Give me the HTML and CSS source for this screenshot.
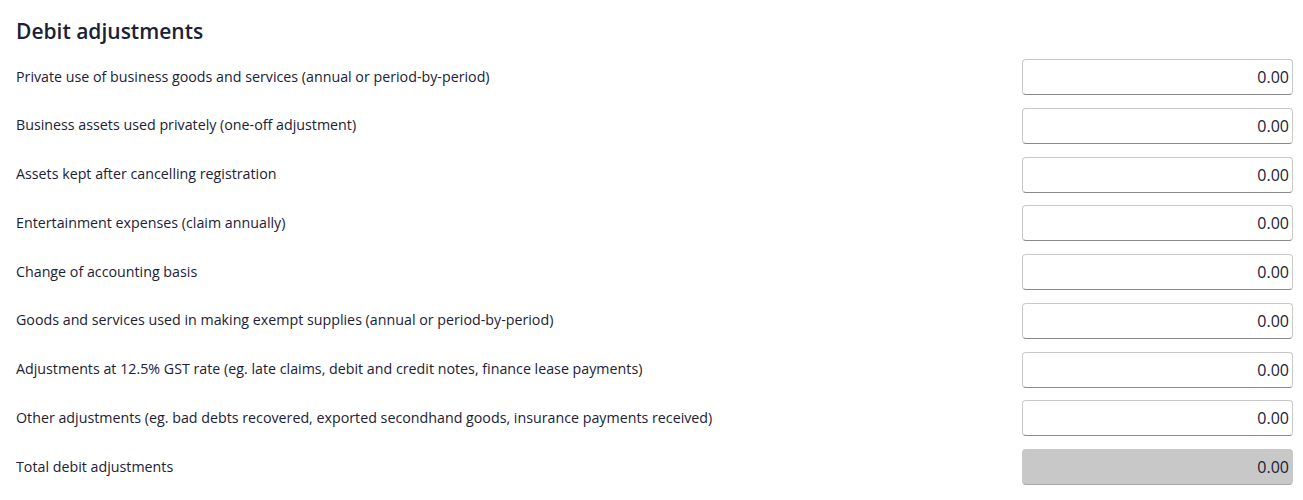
FILE: index.html
```html
<!DOCTYPE html>
<html lang="en">
<head>
    <meta charset="UTF-8">
    <title>Debit adjustments</title>
    <link rel="stylesheet" href="styles.css">
</head>
<body>
    <div class="wrapper">
        <h2 class="section-title">Debit adjustments</h2>
        <div class="adj-list">
            <div class="adj-row">
                <label class="adj-label">Private use of business goods and services (annual or period-by-period)</label>
                <input class="adj-input" type="text" value="0.00">
            </div>
            <div class="adj-row">
                <label class="adj-label">Business assets used privately (one-off adjustment)</label>
                <input class="adj-input" type="text" value="0.00">
            </div>
            <div class="adj-row">
                <label class="adj-label">Assets kept after cancelling registration</label>
                <input class="adj-input" type="text" value="0.00">
            </div>
            <div class="adj-row">
                <label class="adj-label">Entertainment expenses (claim annually)</label>
                <input class="adj-input" type="text" value="0.00">
            </div>
            <div class="adj-row">
                <label class="adj-label">Change of accounting basis</label>
                <input class="adj-input" type="text" value="0.00">
            </div>
            <div class="adj-row">
                <label class="adj-label">Goods and services used in making exempt supplies (annual or period-by-period)</label>
                <input class="adj-input" type="text" value="0.00">
            </div>
            <div class="adj-row">
                <label class="adj-label">Adjustments at 12.5% GST rate (eg. late claims, debit and credit notes, finance lease payments)</label>
                <input class="adj-input" type="text" value="0.00">
            </div>
            <div class="adj-row">
                <label class="adj-label">Other adjustments (eg. bad debts recovered, exported secondhand goods, insurance payments received)</label>
                <input class="adj-input" type="text" value="0.00">
            </div>
            <div class="adj-row">
                <label class="adj-label">Total debit adjustments</label>
                <input class="adj-input total" type="text" value="0.00" readonly>
            </div>
        </div>
    </div>
</body>
</html>
```

FILE: styles.css
```css
/* Presets */
html,
body {
    margin: 0;
    background: #fff;
    color: #1c2135;
    font-family: 'Open Sans', 'Noto Sans', sans-serif;
}

.wrapper {
    padding: 14px 10px 0 16px;
}

/* Components */
.section-title {
    margin: 0 0 11px;
    font-size: 21px;
    font-weight: 600;
    line-height: 34px;
}

.adj-list {
    display: flex;
    flex-direction: column;
    gap: 12.75px;
}

.adj-row {
    display: flex;
    align-items: center;
    justify-content: space-between;
}

.adj-label {
    font-size: 14.25px;
    line-height: 18px;
    margin-top: -1px;
}

.adj-input {
    box-sizing: border-box;
    width: 271px;
    height: 36px;
    padding: 0 3px 0 8px;
    border: 1px solid #c9c9c9;
    border-bottom-color: #8a8a8a;
    border-radius: 4px;
    background: #fff;
    color: #1c2135;
    font-family: inherit;
    font-size: 16px;
    text-align: right;
}

.adj-input.total {
    background: #c8c8c8;
    border-color: #c8c8c8;
    border-bottom-color: #a8a8a8;
}
```
